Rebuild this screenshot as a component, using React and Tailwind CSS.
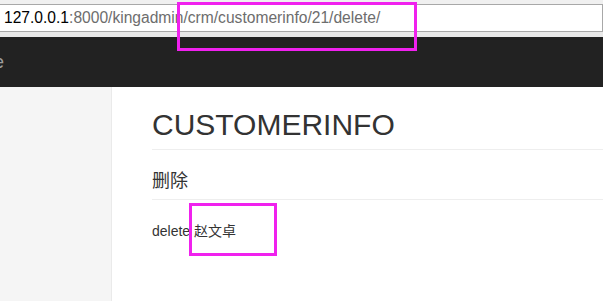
export default function App() {
  return (
    <div className="relative w-[603px] h-[301px] overflow-hidden bg-white font-['Liberation_Sans','Noto_Sans_CJK_SC',sans-serif]">
      {/* browser chrome */}
      <div className="h-[4px] bg-[#f0f0f0]"></div>
      <div className="h-[28px] flex items-center bg-white border-y border-r border-[#a8a8a8] pl-[4px] text-[15.6px] whitespace-nowrap">
        <span className="text-black">127.0.0.1</span>
        <span className="text-[#6d6d6d]">:8000/kingadmin/crm/customerinfo/21/delete/</span>
      </div>
      <div className="h-[5px] bg-[#e9e9e9]"></div>

      {/* navbar */}
      <nav className="h-[50px] bg-[#222222] flex items-center">
        <span className="ml-[-6px] text-[18px] leading-[20px] text-[#9d9d9d]">e</span>
      </nav>

      {/* body */}
      <div className="flex h-[214px]">
        <aside className="w-[112px] shrink-0 bg-[#f5f5f5] border-r border-[#eaeaea]"></aside>
        <main className="flex-1 pl-[40px] text-[#333333]">
          <h1 className="mt-[21px] pb-[8px] border-b border-[#eeeeee] text-[30px] leading-[33px]">CUSTOMERINFO</h1>
          <h2 className="mt-[19px] pb-[10px] border-b border-[#eeeeee] text-[18px] leading-[20px] font-['Noto_Sans_CJK_SC',sans-serif]">删除</h2>
          <p className="mt-[21px] text-[14px] leading-[20px]">delete 赵文卓</p>
        </main>
      </div>

      {/* annotation boxes */}
      <div className="absolute left-[177px] top-[2px] w-[240px] h-[49px] border-[3px] border-[#f021ee]"></div>
      <div className="absolute left-[189px] top-[203px] w-[88px] h-[53px] border-[3px] border-[#f021ee]"></div>
    </div>
  )
}
